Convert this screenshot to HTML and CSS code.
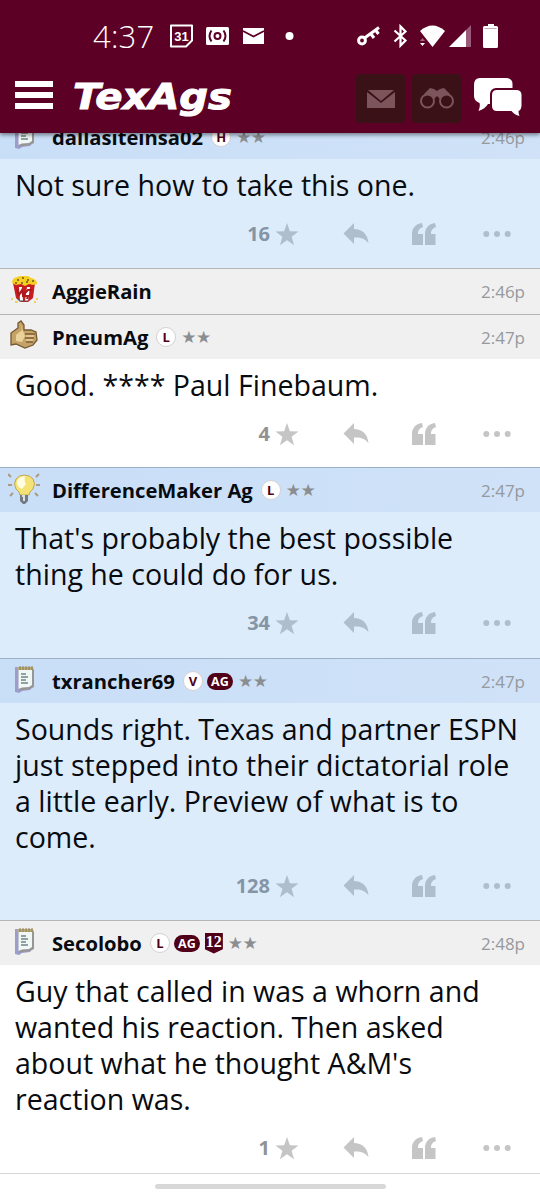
FILE: index.html
```html
<!DOCTYPE html>
<html lang="en">
<head>
<meta charset="utf-8">
<title>TexAgs</title>
<link rel="stylesheet" href="styles.css">
</head>
<body>
<svg class="defs" width="0" height="0">
  <symbol id="star" viewBox="0 0 24 24"><path d="M12 0l3 8.700 9 .2-7.200 5.500 2.600 8.900L12 18l-7.400 5.300 2.600-8.900L0 8.900l9-.2z"/></symbol>
  <symbol id="reply" viewBox="0 0 26 24"><path d="M11 1v6c8 .3 13.500 4.500 14.500 14-4-4.500-8-6-14.500-5.500V22L.5 11.500z"/></symbol>
  <symbol id="quote" viewBox="0 0 24 22"><path d="M0 22V11C0 5 3.500 1 10 0l1 4C8 5 6 7 6 11h5v11zM13 22V11c0-6 3.500-10 10-11l1 4c-3 1-5 3-5 7h4.500v11z"/></symbol>
  <symbol id="more" viewBox="0 0 28 8"><circle cx="3.300" cy="4" r="3"/><circle cx="14" cy="4" r="3"/><circle cx="24.700" cy="4" r="3"/></symbol>
  <symbol id="note" viewBox="0 0 22 28">
    <path d="M1 2h18v19l-3 4-8 1-3 2-4-1z" fill="#9c9dcb"/><path d="M4 3h15l1 2v17l-4 2-8 1-3 1z" fill="#969694"/>
    <path d="M4.500 4H18v16l-3 2-7 .5-3.500 1.500z" fill="#f1f7f5"/><path d="M3 2h16v3H3z" fill="#b9ac77"/>
    <path d="M6 1v4M9 1v4M12 1v4M15 1v4M18 1v4" stroke="#8b7d58"/><path d="M7 9h5M7 12h7M7 15h5M7 18h7" stroke="#6f8585" stroke-width="1.300"/>
  </symbol>
</svg>
<div class="screen">
  <header class="top">
    <div class="status">
      <span class="clock">4:37</span>
      <svg class="status-icons" width="446" height="30" viewBox="94 21 446 30">
        <path d="M171 25.500h21v15l-6 6h-15z" fill="none" stroke="#fff" stroke-width="2" stroke-linejoin="round"/>
        <text x="181.500" y="40.500" class="date">31</text>
        <rect x="206" y="27" width="23" height="18" rx="1.500" fill="#fff"/>
        <g fill="none" stroke="#5c0025" stroke-width="2"><circle cx="217.500" cy="36" r="3"/><path d="M211.500 30.500q-4 5.500 0 11M223.500 30.500q4 5.500 0 11"/></g>
        <rect x="243" y="28" width="21" height="16" fill="#fff"/><path d="M243 31l10.500 5.500L264 31" fill="none" stroke="#5c0025" stroke-width="1.800"/>
        <circle cx="289.500" cy="36" r="4" fill="#fff"/>
        <g fill="none" stroke="#fff" stroke-width="3"><circle cx="362" cy="40.500" r="3.400"/><path d="M364.500 38L379 27.500M371 34l3 4M375.500 30l3 4"/></g>
        <path d="M394.500 30.500l11 10-5 5V26.500l5 5-11 10" fill="none" stroke="#fff" stroke-width="2.200"/>
        <path d="M420 31q12.500-11 25 0l-12.500 16z" fill="#fff"/><path d="M420 41l2.500-3 2.500 3z" fill="#a56a80"/><path d="M420 43h5l-2.500 3z" fill="#fff"/>
        <path d="M449 47l17-17v17z" fill="#fff"/><path d="M466 30l5-5v22h-5z" fill="#9b597a"/>
        <path d="M488 24h6v2h2.500q1.500 0 1.500 1.500v19q0 1.500-1.500 1.500h-12q-1.500 0-1.500-1.500v-19q0-1.500 1.500-1.500h3.500z" fill="#fff"/><path d="M484.500 28.500h12" stroke="#c7aab5"/>
      </svg>
    </div>
    <nav class="nav">
      <div class="burger"><i></i><i></i><i></i></div>
      <svg class="logo" width="162" height="46" viewBox="0 0 162 46"><text x="1" y="33" textLength="159" lengthAdjust="spacingAndGlyphs">TexAgs</text></svg>
      <div class="buttons">
        <span class="box"><svg width="28" height="20" viewBox="0 0 28 20"><path d="M1 1h26L14 12zM0 3l14 11L28 3v16H0z" fill="#7b555b"/></svg></span>
        <span class="box"><svg width="34" height="22" viewBox="0 0 34 22"><path d="M4 6l6-6 4 1 3 2 3-2 4-1 6 6-8 5h-2l-3-3-3 3h-2z" fill="#7b555b"/><circle cx="7.500" cy="13" r="6.500" fill="#3a1117" stroke="#7b555b" stroke-width="2"/><circle cx="26.500" cy="13" r="6.500" fill="#3a1117" stroke="#7b555b" stroke-width="2"/></svg></span>
        <svg class="chat" width="50" height="42" viewBox="0 0 50 42"><path d="M7 1h26q6.500 0 6.500 6v18q0 2-7 2H15q-3 5-9.500 7 2-5 1-8-5.500-2-5.500-7V8q0-7 6-7z" fill="#fff"/><rect x="17" y="11" width="34" height="26" rx="6" fill="#5c0025"/><path d="M24 13h19q5.500 0 5.500 5v10q0 5-3 6 0 3 1 5-5-1-8-5H24q-5 0-5-5V18q0-5 5-5z" fill="#fff"/></svg>
      </div>
    </nav>
  </header>
  <main class="feed">
    <article class="post blue first">
      <div class="head"><svg class="avatar" viewBox="0 0 32 36"><use href="#note" x="6" y="2" width="22" height="28"/></svg><b>dallasiteinsa02</b><span class="badge">H</span><span class="stars">★★</span><time>2:46p</time></div>
      <p>Not sure how to take this one.</p>
      <div class="actions"><span class="count">16</span><svg class="i-star"><use href="#star"/></svg><svg class="i-reply"><use href="#reply"/></svg><svg class="i-quote"><use href="#quote"/></svg><svg class="i-more"><use href="#more"/></svg></div>
    </article>
    <article class="post bare">
      <div class="head"><svg class="avatar" viewBox="0 0 32 36"><path d="M5 10h22l-2 15-5 4h-7l-5-4z" fill="#c71d20"/><path d="M11 14h3l1 14h-3zM19 14h3l-2 14h-3z" fill="#fff"/><path d="M4 10q0-5 5-6l3-1h8l3 2q6 1 6 6l-4 1-4-1-4 2-4-2-5 1z" fill="#f5cf22"/><path d="M9 7h2M14 5h2M19 7h2M24 8h2M7 10h2M13 10h2M18 9h2" stroke="#74551c" stroke-width="1.500"/><path d="M9 16l2 6 3-5 1 5 5-5h4M14 23h6l-1 3" fill="none" stroke="#ad1820" stroke-width="2"/><path d="M9 25l3 3h8" fill="none" stroke="#505055" stroke-width="1.200"/><path d="M3 26h2M28 26h2M7 29h3M26 29h2" stroke="#efd060" stroke-width="2"/></svg><b>AggieRain</b><time>2:46p</time></div>
    </article>
    <article class="post short">
      <div class="head"><svg class="avatar" viewBox="0 0 32 36"><path d="M3 14l7-5V4l3-2 3 4v5h7l5 2 1 8-4 5-8 3-9-4-5 1z" fill="#c5a266" stroke="#765832" stroke-width="1.300"/><path d="M12 4l2 7-6 5v6l6 1 3-6z" fill="#ead29a"/><path d="M17 15h10M17 19h9M18 23h7" stroke="#80613a" stroke-width="1.300"/><path d="M18 17h8M18 21h7" stroke="#ead29a" stroke-width="1.500"/></svg><b>PneumAg</b><span class="badge">L</span><span class="stars">★★</span><time>2:47p</time></div>
      <p>Good. **** Paul Finebaum.</p>
      <div class="actions"><span class="count">4</span><svg class="i-star"><use href="#star"/></svg><svg class="i-reply"><use href="#reply"/></svg><svg class="i-quote"><use href="#quote"/></svg><svg class="i-more"><use href="#more"/></svg></div>
    </article>
    <article class="post blue">
      <div class="head"><svg class="avatar" viewBox="0 0 32 36"><path d="M0 2l3 3M31 2l-3 3M0 13h4M32 13h-4M2 24l3-3M30 24l-3-3" stroke="#a99c83" stroke-width="2"/><path d="M12 23q0-3-4-6-3-5 0-10 3-4 8-4 6 0 9 4t0 10q-4 3-4 6z" fill="#f4e274" stroke="#c0a659"/><path d="M9 9q3-5 8-5-1 5 1 8l-4 5q-6-3-5-8z" fill="#fffce0"/><path d="M12 23h8v6l-3 3h-2l-3-3z" fill="#747982"/><path d="M14 24h2v5" fill="none" stroke="#d9dfe2" stroke-width="2"/></svg><b>DifferenceMaker Ag</b><span class="badge">L</span><span class="stars">★★</span><time>2:47p</time></div>
      <p>That's probably the best possible<br>thing he could do for us.</p>
      <div class="actions"><span class="count">34</span><svg class="i-star"><use href="#star"/></svg><svg class="i-reply"><use href="#reply"/></svg><svg class="i-quote"><use href="#quote"/></svg><svg class="i-more"><use href="#more"/></svg></div>
    </article>
    <article class="post blue">
      <div class="head"><svg class="avatar" viewBox="0 0 32 36"><use href="#note" x="6" y="2" width="22" height="28"/></svg><b>txrancher69</b><span class="badge">V</span><span class="ag">AG</span><span class="stars">★★</span><time>2:47p</time></div>
      <p>Sounds right. Texas and partner ESPN<br>just stepped into their dictatorial role<br>a little early. Preview of what is to<br>come.</p>
      <div class="actions"><span class="count">128</span><svg class="i-star"><use href="#star"/></svg><svg class="i-reply"><use href="#reply"/></svg><svg class="i-quote"><use href="#quote"/></svg><svg class="i-more"><use href="#more"/></svg></div>
    </article>
    <article class="post">
      <div class="head"><svg class="avatar" viewBox="0 0 32 36"><use href="#note" x="6" y="2" width="22" height="28"/></svg><b>Secolobo</b><span class="badge">L</span><span class="ag">AG</span><span class="twelve">12</span><span class="stars">★★</span><time>2:48p</time></div>
      <p>Guy that called in was a whorn and<br>wanted his reaction. Then asked<br>about what he thought A&amp;M's<br>reaction was.</p>
      <div class="actions"><span class="count">1</span><svg class="i-star"><use href="#star"/></svg><svg class="i-reply"><use href="#reply"/></svg><svg class="i-quote"><use href="#quote"/></svg><svg class="i-more"><use href="#more"/></svg></div>
    </article>
  </main>
  <footer class="home"><i></i></footer>
</div>
</body>
</html>
```
FILE: styles.css
```css
* { box-sizing: border-box; }
body { margin: 0; background: #fff; font-family: "Open Sans", "Noto Sans", sans-serif; color: #080b10; }
.defs { position: absolute; }
.screen { width: 540px; height: 1200px; display: flex; flex-direction: column; overflow: hidden; }
.top { height: 133px; flex: none; background: #5c0025; box-shadow: 0 2px 4px rgba(0, 0, 0, .45); z-index: 1; }
.status { height: 72px; padding: 21px 0 0 93px; display: grid; }
.clock { grid-area: 1 / 1; font: 300 31px/30px "Open Sans", sans-serif; letter-spacing: .2px; color: #fff; }
.status-icons { grid-area: 1 / 1; margin-left: 1px; }
.date { font: bold 13px "Liberation Sans", sans-serif; fill: #fff; text-anchor: middle; }
.nav { display: flex; height: 61px; padding-left: 15px; }
.burger { display: flex; flex-direction: column; gap: 5.500px; width: 38px; padding-top: 9px; }
.burger i { height: 5.500px; background: #fff; }
.logo { margin: 4px 0 0 19px; }
.logo text { font: italic bold 36px "DejaVu Sans", sans-serif; fill: #fff; stroke: #fff; stroke-width: 1px; }
.buttons { display: flex; margin-left: auto; padding: 2px 17px 0 0; gap: 7px; }
.box { width: 49px; height: 49px; border-radius: 4px; background: #3a1117; display: flex; align-items: center; justify-content: center; }
.chat { margin: 3px 0 0 5px; }
.feed { height: 1041px; flex: none; overflow: hidden; border-bottom: 1px solid #d6d6d6; }
.post { border-top: 1px solid #b3b6b9; background: #fff; }
.post.blue { background: #ddecfb; border-top-color: #9eb0c8; }
.first { margin-top: -19px; }
.head { height: 44px; padding: 0 15px 0 8px; display: flex; align-items: center; background: #f0f0f0; }
.bare .head { height: 45px; padding-bottom: 1px; }
.blue .head { background: linear-gradient(90deg, #c9def7, #cfe2f8); }
.avatar { width: 32px; height: 36px; margin-right: 12px; }
.head b { font-size: 20.200px; line-height: 28px; margin-right: 8px; }
.badge { width: 20px; height: 20px; border-radius: 50%; border: 1px solid #d5d0d2; background: #fff; color: #500016; font: bold 13px/18px "Open Sans", sans-serif; text-align: center; }
.ag { width: 26px; height: 17px; border-radius: 9px; background: #500018; color: #fff; font: bold 12.500px/17px "Open Sans", sans-serif; text-align: center; margin-left: 4px; }
.twelve { width: 18px; height: 21px; margin-left: 5px; clip-path: polygon(0 0, 100% 0, 100% 80%, 50% 100%, 0 80%); background: #500018; color: #fff; font: bold 16px/18px "Liberation Serif", serif; text-align: center; }
.stars { margin-left: 5px; color: #8b8e91; font: 17px/20px "DejaVu Sans", sans-serif; letter-spacing: -.5px; }
.head time { margin-left: auto; font-size: 17px; color: #96999d; }
.post p { margin: 0; padding: 8px 0 0 15px; font-size: 28.550px; line-height: 36px; white-space: nowrap; }
.actions { height: 65px; display: grid; grid-template-columns: 270px 73px 69px 71px 1fr; padding-top: 18px; align-items: center; align-content: start; fill: #c5c5c5; color: #929292; }
.short .actions { height: 64px; }
.short + .post .actions { height: 66px; }
.blue .actions { fill: #afbecc; color: #8495a6; }
.count { text-align: right; font-size: 20px; line-height: 26px; font-weight: bold; }
.i-star { width: 24px; height: 23px; margin-left: 5px; }
.i-reply { width: 26px; height: 24px; }
.i-quote { width: 24px; height: 22px; }
.i-more { width: 28px; height: 8px; }
.home { flex: 1; display: flex; justify-content: center; padding-top: 10px; background: #fff; }
.home i { width: 231px; height: 5px; border-radius: 3px; background: #d8d8d8; }
```
